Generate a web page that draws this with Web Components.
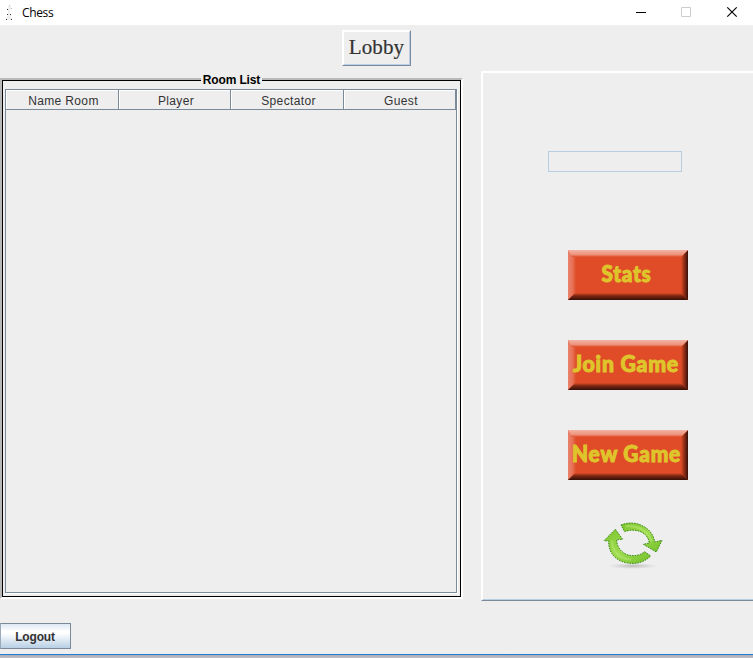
<!DOCTYPE html>
<html lang="en"><head><meta charset="utf-8"><title>Chess</title>
<style>html,body{margin:0;height:100%;overflow:hidden;background:#eee}</style></head>
<body>
<chess-lobby></chess-lobby>
<script>
function define(name, html, setup) {
  customElements.define(name, class extends HTMLElement {
    constructor() {
      super();
      this.attachShadow({mode: 'open'}).innerHTML = html;
    }
    connectedCallback() { if (setup) setup(this, this.shadowRoot); }
  });
}

define('title-bar', `<style>
:host{display:flex;height:25px;background:#fff;align-items:center;font:12px "Open Sans","Noto Sans",sans-serif;color:#000}
.pawn{width:14px;height:25px;margin-left:2px;flex:none}
.t{margin-left:6px;flex:1;line-height:24px;letter-spacing:-.35px}
.c{width:138px;height:25px;flex:none}
svg{display:block}
</style>
<svg class="pawn" viewBox="2 0 14 25" shape-rendering="crispEdges"><path fill="#efefef" d="M8 6h3v4h-1v4h1v4h1v2H6v-2h1v-2h1v-6H7V8h1z"/><path fill="#bbb" d="M9 5h1v1h-1zM11 8h1v1h-1z"/><path fill="#333" d="M7 9h1v1h-1zM7 14h1v1h-1zM10 14h1v1h-1zM6 19h1v1h-1zM11 19h1v1h-1z"/></svg>
<span class="t"><slot></slot></span>
<svg class="c" viewBox="615 0 138 25"><path fill="#000" d="M636 12h10v1h-10z"/><path fill="none" stroke="#ccc" d="M681.500 7.500h9v9h-9z"/><path stroke="#000" stroke-width="1.150" d="M727.300 7.300l9.400 9.400M736.700 7.300l-9.400 9.400"/></svg>`);

define('lobby-button', `<style>
:host{display:block;width:69px;height:36px;box-sizing:border-box;border:1px solid;border-color:#fff #7a8a99 #7a8a99 #fff}
div{box-sizing:border-box;height:34px;border:1px solid;border-color:#fff #b8cfe5 #b8cfe5 #fff;font:21px/30px "Liberation Serif",serif;color:#333;text-align:center;-webkit-text-stroke:.2px #333;letter-spacing:.1px}
</style><div><slot></slot></div>`);

define('room-list', `<style>
:host{display:block;position:relative;width:463px;height:521px;margin-top:7px;box-sizing:border-box;border:2px solid;border-color:#b9b9b9 #fff #fff #b9b9b9}
.in{box-sizing:border-box;height:517px;border:1px solid #000;padding:8px 3px 3px 2px;background:#eee}
.pane{box-sizing:border-box;height:504px;border:1px solid #7a8a99;box-shadow:1px 1px #fff}
.head{display:grid;grid-template-columns:113px 112px 113px 112px;height:20px}
.title{position:absolute;left:199px;top:-8px;width:61px;background:#eee;font:bold 12px/16px "Liberation Sans",sans-serif;color:#000;text-align:center;white-space:nowrap;letter-spacing:-.15px}
</style>
<div class="in"><div class="pane"><div class="head"></div></div></div>
<div class="title">Room List</div>`, (h, r) => {
  r.querySelector('.head').innerHTML = h.getAttribute('columns').split(',').map(c => `<column-head>${c}</column-head>`).join('');
});

define('column-head', `<style>
:host{display:block;box-sizing:border-box;height:20px;border-right:1px solid #7a8a99;border-bottom:1px solid #7a8a99;box-shadow:inset 1px 1px #fff;font:12px/22px "Liberation Sans",sans-serif;color:#333;text-align:center;padding-left:3px;letter-spacing:.35px;white-space:nowrap}
</style><slot></slot>`);

define('glossy-button', `<style>
:host{display:block;width:120px;height:50px}
svg{display:block;overflow:visible}
text{font:900 22.5px Lato,sans-serif;letter-spacing:.8px;fill:#dfc52c;stroke:#dfc52c;stroke-width:1px}
</style>
<svg width="120" height="50" viewBox="0 0 120 50">
<defs>
<linearGradient id="l"><stop offset="0" stop-color="#e9826b"/><stop offset=".55" stop-color="#e87257"/><stop offset="1" stop-color="#df4c27"/></linearGradient>
<linearGradient id="t" x2="0" y2="1"><stop offset="0" stop-color="#f2b4a5"/><stop offset=".65" stop-color="#ed927c"/><stop offset="1" stop-color="#df4c27"/></linearGradient>
<linearGradient id="r"><stop offset="0" stop-color="#df4c27"/><stop offset=".5" stop-color="#8b2c15"/><stop offset="1" stop-color="#35100a"/></linearGradient>
<linearGradient id="b" x2="0" y2="1"><stop offset="0" stop-color="#df4c27"/><stop offset=".4" stop-color="#7c2712"/><stop offset="1" stop-color="#350f08"/></linearGradient>
</defs>
<path fill="#df4c27" d="M0 0h120v50H0z"/>
<path fill="url(#l)" d="M0 0l8 5v39l-8 6z"/>
<path fill="url(#r)" d="M120 0l-7 7v36l7 7z"/>
<path fill="url(#t)" d="M0 0h120l-7 7H4z"/>
<path fill="url(#b)" d="M0 50l7-7h106l7 7z"/>
<text y="32.300" lengthAdjust="spacingAndGlyphs"></text></svg>`, (h, r) => {
  const t = r.querySelector('text');
  t.textContent = h.getAttribute('label');
  t.setAttribute('x', h.getAttribute('x'));
  t.setAttribute('textLength', h.getAttribute('w'));
});

define('refresh-icon', `<style>:host{display:block;width:80px;height:70px}svg{display:block}</style>
<svg width="80" height="70" viewBox="0 0 240 210">
<defs><linearGradient id="g" x2="1" y2="1"><stop offset="0" stop-color="#7cc52d"/><stop offset=".5" stop-color="#9edb4e"/><stop offset="1" stop-color="#72c029"/></linearGradient>
<radialGradient id="s"><stop offset="0" stop-color="#aaa" stop-opacity=".75"/><stop offset="1" stop-color="#bbb" stop-opacity="0"/></radialGradient></defs>
<ellipse cx="113" cy="168" rx="76" ry="9" fill="url(#s)"/>
<g fill="url(#g)" stroke="#3f8a1c" stroke-width="3" stroke-dasharray="5 3" stroke-linejoin="round">
<path d="M78 45C97 37 121 37 139 46C163 56 176 75 179 96L201 91L184 126L145 103L163 99C160 78 145 65 126 62C113 59 98 61 89 65Z"/>
<path d="M61 58L83 88L65 89C65 110 78 127 97 134C116 140 135 137 149 125L167 138C148 157 124 163 98 159C64 154 40 130 41 93L27 92Z"/></g>
<path d="M92 49C130 44 160 65 170 95M51 91C50 122 72 147 108 149" fill="none" stroke="#c6ee88" stroke-opacity=".4" stroke-width="7"/>
</svg>`);

define('side-panel', `<style>
:host{display:block;flex:1;margin-left:18px;box-sizing:border-box;height:530px;border-top:1px solid #fff;border-left:1px solid #fff;border-bottom:1px solid #7a8a99}
.in{box-sizing:border-box;height:528px;border-top:1px solid #fff;border-left:1px solid #fff;border-bottom:1px solid #b8cfe5;display:flex;flex-direction:column}
.field{box-sizing:border-box;width:134px;height:21px;border:1px solid #bacee2;margin:78px 0 78px 65px;flex:none}
.btns{display:grid;gap:40px;margin-left:85px}
refresh-icon{margin:30px 0 0 112px}
</style><div class="in"><div class="field"></div>
<div class="btns"><glossy-button label="Stats" x="33.500" w="50"></glossy-button><glossy-button label="Join Game" x="5" w="106"></glossy-button><glossy-button label="New Game" x="4" w="109"></glossy-button></div>
<refresh-icon></refresh-icon></div>`);

define('metal-button', `<style>
:host{display:block;width:71px;height:26px;box-sizing:border-box;border:1px solid #7a8a99;border-left-color:#9aabbc;background:linear-gradient(#dde8f3,#fff 30%,#fff 38%,#b8cfe5);font:bold 12px/26px "Liberation Sans",sans-serif;color:#333;text-align:center;letter-spacing:-.15px;text-indent:-1px}
</style><slot></slot>`);

define('chess-lobby', `<style>
:host{display:flex;flex-direction:column;width:753px;height:658px;background:#eee}
.top{display:flex;justify-content:center;padding-top:5px;height:41px;flex:none}
.row{display:flex;height:530px;flex:none}
metal-button{margin-top:22px;flex:none}
.edge{margin-top:5px;height:4px;background:linear-gradient(#1f7fd6 1px,#a9aab4 1px,#c1c0c9)}
</style>
<title-bar>Chess</title-bar>
<div class="top"><lobby-button>Lobby</lobby-button></div>
<div class="row"><room-list columns="Name Room,Player,Spectator,Guest"></room-list><side-panel></side-panel></div>
<metal-button>Logout</metal-button>
<div class="edge"></div>`);
</script>
</body></html>
